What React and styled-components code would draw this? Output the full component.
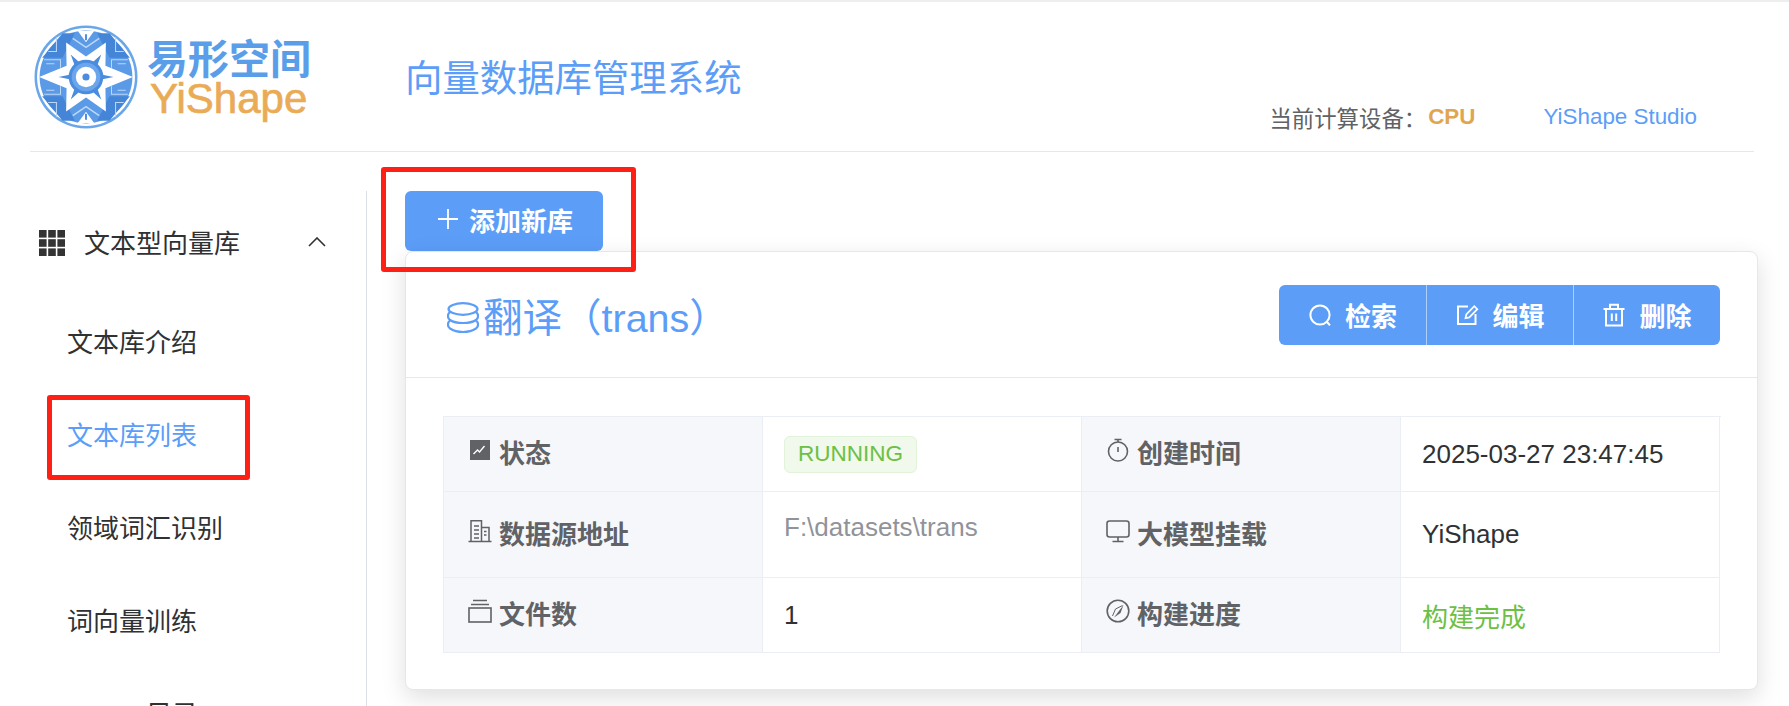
import React from 'react';
import styled, { createGlobalStyle } from 'styled-components';

const FONT = '"Liberation Sans", "Noto Sans CJK SC", sans-serif';

const GlobalStyle = createGlobalStyle`
  html, body {
    margin: 0;
    padding: 0;
    background: #fff;
    font-family: ${FONT};
  }
  * { box-sizing: border-box; }
`;

const Page = styled.div`
  width: 1789px;
  height: 706px;
  overflow: hidden;
  border-top: 2px solid #eeeeee;
  position: relative;
`;

const Header = styled.header`
  display: flex;
  height: 150px;
  margin: 0 35px 0 30px;
  border-bottom: 1px solid #e4e7ed;
`;

const Logo = styled.div`
  display: flex;
  align-items: center;
  gap: 9px;
  width: 375px;
  padding: 0 0 0 4px;
`;

const LogoText = styled.div`
  display: flex;
  flex-direction: column;
`;

const LogoCn = styled.span`
  font-size: 41px;
  line-height: 44px;
  font-weight: 700;
  color: #5a9eea;
`;

const LogoEn = styled.span`
  font-size: 42px;
  line-height: 33px;
  margin-left: 3px;
  color: #eaab56;
  -webkit-text-stroke: 0.7px #eaab56;
`;

const AppTitle = styled.div`
  font-size: 37.4px;
  line-height: 50px;
  color: #5c9df8;
  padding-top: 52px;
`;

const HeaderRight = styled.div`
  display: flex;
  align-items: center;
  margin-left: auto;
  padding: 100px 57px 0 0;
  height: 130px;
  font-size: 22.4px;
  color: #606266;
`;

const Cpu = styled.b`
  color: #e0a64f;
  margin-left: 2px;
`;

const StudioLink = styled.a`
  color: #5c9df8;
  margin-left: 68px;
`;

const Body = styled.div`
  display: flex;
  padding: 39px 31px 0 0;
`;

const Sidebar = styled.aside`
  width: 367px;
  height: 600px;
  flex: none;
  border-right: 1px solid #dcdfe6;
`;

const MenuHead = styled.div`
  display: flex;
  align-items: center;
  height: 106px;
  padding: 0 40px 6px 39px;
  font-size: 26px;
  color: #303133;
  gap: 19px;
`;

const MenuGlyph = styled.span`
  display: flex;
  margin-top: 4px;
`;

const MenuChevron = styled.span`
  margin-left: auto;
  margin-top: 2px;
  display: flex;
`;

const MenuItem = styled.div`
  height: 93px;
  line-height: 93px;
  padding-left: ${({ $indent }) => $indent || 67}px;
  font-size: 26px;
  white-space: nowrap;
  color: ${({ $active }) => ($active ? '#5c9df8' : '#303133')};
`;

const Main = styled.main`
  flex: 1;
  padding-left: 38px;
`;

const PrimaryButton = styled.button`
  display: flex;
  align-items: center;
  gap: 9px;
  height: 60px;
  width: 198px;
  padding: 0 0 4px 31px;
  border: 0;
  border-radius: 6px;
  background: #5c9df8;
  color: #fff;
  font-family: ${FONT};
  font-size: 26px;
  font-weight: 700;
`;

const Card = styled.section`
  position: relative;
  height: 439px;
  background: #fff;
  border: 1px solid #e4e7ed;
  border-radius: 8px;
  box-shadow: 0 8px 24px rgba(0, 0, 0, 0.13);
`;

const CardHead = styled.div`
  display: flex;
  align-items: center;
  justify-content: space-between;
  height: 126px;
  padding: 0 37px 0 41px;
  border-bottom: 1px solid #e4e7ed;
`;

const CardTitle = styled.h2`
  display: flex;
  align-items: center;
  gap: 4px;
  margin: 6px 0 0;
  font-size: 39.5px;
  line-height: 50px;
  font-weight: 400;
  color: #5c9df8;
`;

const ButtonGroup = styled.div`
  display: flex;
  border-radius: 6px;
  overflow: hidden;
`;

const GroupButton = styled.button`
  display: flex;
  align-items: center;
  justify-content: center;
  gap: 13px;
  width: 147px;
  height: 60px;
  padding: 0;
  border: 0;
  border-left: ${({ $first }) => ($first ? '0' : '1px solid rgba(255, 255, 255, 0.5)')};
  background: #5c9df8;
  color: #fff;
  font-family: ${FONT};
  font-size: 26px;
  font-weight: 700;
`;

const CardBody = styled.div`
  padding: 38px 36px 0 37px;
`;

const InfoGrid = styled.div`
  display: grid;
  grid-template-columns: repeat(4, 319px);
  grid-template-rows: 75px 86px 75px;
  border-top: 1px solid #ebeef5;
  border-left: 1px solid #ebeef5;
`;

const LabelCell = styled.div`
  display: flex;
  align-items: center;
  gap: 7px;
  padding: 0 0 5px 23px;
  background: #f5f7fa;
  border-right: 1px solid #ebeef5;
  border-bottom: 1px solid #ebeef5;
  font-size: 26px;
  font-weight: 700;
  color: #606266;
`;

const LabelIcon = styled.span`
  display: flex;
  width: 25px;
  justify-content: center;
  margin-top: -3px;
`;

const ValueCell = styled.div`
  display: flex;
  align-items: center;
  padding: 0 0 ${({ $lift }) => $lift || 0}px 21px;
  border-right: 1px solid #ebeef5;
  border-bottom: 1px solid #ebeef5;
  font-size: 26px;
  color: ${({ $color }) => $color || '#303133'};
`;

const StatusTag = styled.span`
  display: inline-flex;
  align-items: center;
  justify-content: center;
  width: 133px;
  height: 37px;
  border: 1px solid #e1f3d8;
  border-radius: 6px;
  background: #f0f9eb;
  color: #6cc044;
  font-size: 22.5px;
`;

// red annotation frames drawn on top of the screenshot
const Annotation = styled.div`
  position: absolute;
  left: ${({ $x }) => $x}px;
  top: ${({ $y }) => $y}px;
  width: ${({ $w }) => $w}px;
  height: ${({ $h }) => $h}px;
  border: 5px solid #ff2015;
  border-radius: 3px;
  pointer-events: none;
`;

const Stroke = ({ size = 24, width = 2, children }) => (
  <svg
    width={size}
    height={size}
    viewBox="0 0 24 24"
    fill="none"
    stroke="currentColor"
    strokeWidth={width}
  >
    {children}
  </svg>
);

const PlusIcon = () => (
  <Stroke size={24} width={1.8}>
    <path d="M12 2v20M2 12h20" />
  </Stroke>
);

const SearchIcon = () => (
  <Stroke>
    <circle cx="12" cy="12" r="9.6" />
    <path d="M19 19l3 3.4" />
  </Stroke>
);

const EditIcon = () => (
  <Stroke>
    <path d="M13 3.5H3v17.5h17.500V11" />
    <path d="M10.500 15.200l.8-3.800 8-8.200 3 3-8 8.200z" strokeWidth="1.7" />
  </Stroke>
);

const TrashIcon = () => (
  <Stroke>
    <path d="M1.500 6h21M4 6v16.500h16V6M8 6V1.800h8V6M9.800 10.500v7.500M14.200 10.500v7.500" />
  </Stroke>
);

const GridIcon = () => (
  <svg width="26" height="26" viewBox="0 0 26 26" fill="#333">
    {[0, 9.2, 18.4].map((y) =>
      [0, 9.2, 18.4].map((x) => <rect key={`${x}-${y}`} x={x} y={y} width="7.6" height="7.6" />)
    )}
  </svg>
);

const ChevronUp = () => (
  <svg width="18" height="10" viewBox="0 0 18 10" fill="none" stroke="#303133" strokeWidth="1.6">
    <path d="M1 9l8-8 8 8" />
  </svg>
);

const CoinsIcon = () => (
  <svg width="32" height="32" viewBox="0 0 32 32" fill="none" stroke="currentColor" strokeWidth="2.200">
    <ellipse cx="16" cy="7" rx="14.500" ry="5.800" />
    <path d="M3 10C0 12.500 .5 16 3 18c3 2 8 3 13 3s10-1 13-3c2.500-2 3-5.500 0-8" />
    <path d="M3 18.500C0 21 .5 24.500 3 26.500c3 2 8 3.500 13 3.500s10-1.500 13-3.500c2.500-2 3-5.500 0-8" />
  </svg>
);

const ChartIcon = () => (
  <svg width="20" height="20" viewBox="0 0 20 20">
    <rect width="20" height="20" fill="#606266" />
    <path d="M3.500 14l4-4 2 2 5-6" fill="none" stroke="#fff" strokeWidth="1.400" />
  </svg>
);

const BuildingIcon = () => (
  <Stroke width={1.500}>
    <path d="M.5 22.500h23M3 22.500V1.800h10.500v20.700M13.500 8.500h7.500v14M6 7h5M6 11h5M6 15h5M6 19h5M16 12.500h2.500M16 16h2.500" />
  </Stroke>
);

const FilesIcon = () => (
  <Stroke width={1.600}>
    <path d="M5 1.500h14M3 5.500h18" />
    <rect x="1" y="9" width="22" height="14" />
  </Stroke>
);

const TimerIcon = () => (
  <Stroke width={1.600}>
    <circle cx="12" cy="13.500" r="9.500" />
    <path d="M8.500 1.500h7M12 1.500V4M12 9v5" />
  </Stroke>
);

const MonitorIcon = () => (
  <Stroke width={1.600}>
    <rect x="1" y="2" width="22" height="16" rx="2.500" />
    <path d="M12 18v4M6.500 22.500h11" />
  </Stroke>
);

const CompassIcon = () => (
  <Stroke width={1.600}>
    <circle cx="12" cy="12" r="10.800" />
    <path d="M17.500 6L14.500 14 8 18.500z" fill="currentColor" stroke="none" />
    <path d="M16.500 6.500L9.500 10 6.500 17" strokeWidth="1" />
  </Stroke>
);

// points of the star, angle in degrees and radius from the centre
const starPoints = () => {
  const outer = [
    [0, 46],
    [60, 39],
    [120, 39],
    [180, 46],
    [240, 39],
    [300, 39],
  ];
  const pts = [];
  outer.forEach(([a, r]) => {
    const t = (a * Math.PI) / 180;
    pts.push([51 + r * Math.cos(t), 51 + r * Math.sin(t)]);
    const m = ((a + 30) * Math.PI) / 180;
    const inner = (a + 30) % 180 === 90 ? 20 : 22;
    pts.push([51 + inner * Math.cos(m), 51 + inner * Math.sin(m)]);
  });
  return pts.map((p) => p.join(',')).join(' ');
};

const BrandMark = () => (
  <svg width="104" height="104" viewBox="0 0 102 102">
    <circle cx="51" cy="51" r="50.500" fill="#6aa6ea" />
    <circle cx="51" cy="51" r="48" fill="#fff" />
    <circle cx="51" cy="51" r="45.500" fill="#5b9ae6" />
    <path d="M8 32h20L40 8H28zM94 32H74L62 8h12zM8 70h20l12 24H28zM94 70H74L62 94h12z" fill="#4585d8" />
    <g fill="none" stroke="#bcd8f7" strokeWidth="1">
      <path d="M22 12v14h-8M80 12v14h8M22 90V76h-8M80 90V76h8" />
      <path d="M10 34h16v8M92 34H76v8M10 68h16v-8M92 68H76v-8M12 38h8M82 38h8M12 64h8M82 64h8" />
      <path d="M38 13l13 9 13-9M38 89l13-9 13 9" strokeWidth="1.500" />
    </g>
    <polygon points={starPoints()} fill="#fff" />
    <path d="M43 6h16l-8 11zM43 96h16l-8-11z" fill="#fff" />
    <path d="M51 9v6M51 87v6" stroke="#4f8fe0" strokeWidth="2" />
    <g fill="#4a8cde">
      <circle cx="51" cy="51" r="17" />
      <path d="M24 51l12-2.500v5zM78 51l-12-2.500v5z" />
      <path d="M36 29l9 8-5 3zM66 29l-9 8 5 3zM36 73l9-8-5-3zM66 73l-9-8 5-3z" />
    </g>
    <circle cx="51" cy="51" r="14" fill="#6ba6ec" />
    <circle cx="51" cy="51" r="10" fill="#fff" />
    <circle cx="51" cy="51" r="3.500" fill="#4a8cde" />
  </svg>
);

const infoRows = [
  [
    { icon: <ChartIcon />, label: '状态', value: <StatusTag>RUNNING</StatusTag> },
    { icon: <TimerIcon />, label: '创建时间', value: '2025-03-27 23:47:45' },
  ],
  [
    { icon: <BuildingIcon />, label: '数据源地址', value: 'F:\\datasets\\trans', color: '#909399', lift: 14 },
    { icon: <MonitorIcon />, label: '大模型挂载', value: 'YiShape' },
  ],
  [
    { icon: <FilesIcon />, label: '文件数', value: '1' },
    { icon: <CompassIcon />, label: '构建进度', value: '构建完成', color: '#6cc044' },
  ],
];

const menuItems = ['文本库介绍', '文本库列表', '领域词汇识别', '词向量训练'];

export default function App() {
  return (
    <>
      <GlobalStyle />
      <Page>
        <Header>
          <Logo>
            <BrandMark />
            <LogoText>
              <LogoCn>易形空间</LogoCn>
              <LogoEn>YiShape</LogoEn>
            </LogoText>
          </Logo>
          <AppTitle>向量数据库管理系统</AppTitle>
          <HeaderRight>
            当前计算设备：<Cpu>CPU</Cpu>
            <StudioLink>YiShape Studio</StudioLink>
          </HeaderRight>
        </Header>
        <Body>
          <Sidebar>
            <MenuHead>
              <MenuGlyph>
                <GridIcon />
              </MenuGlyph>
              文本型向量库
              <MenuChevron>
                <ChevronUp />
              </MenuChevron>
            </MenuHead>
            {menuItems.map((item) => (
              <MenuItem key={item} $active={item === '文本库列表'}>
                {item}
              </MenuItem>
            ))}
            <MenuItem $indent={146}>目录</MenuItem>
          </Sidebar>
          <Main>
            <PrimaryButton>
              <PlusIcon />
              添加新库
            </PrimaryButton>
            <Card>
              <CardHead>
                <CardTitle>
                  <CoinsIcon />
                  翻译（trans）
                </CardTitle>
                <ButtonGroup>
                  <GroupButton $first>
                    <SearchIcon />
                    检索
                  </GroupButton>
                  <GroupButton>
                    <EditIcon />
                    编辑
                  </GroupButton>
                  <GroupButton>
                    <TrashIcon />
                    删除
                  </GroupButton>
                </ButtonGroup>
              </CardHead>
              <CardBody>
                <InfoGrid>
                  {infoRows.flat().map((cell) => (
                    <React.Fragment key={cell.label}>
                      <LabelCell>
                        <LabelIcon>{cell.icon}</LabelIcon>
                        {cell.label}
                      </LabelCell>
                      <ValueCell $color={cell.color} $lift={cell.lift}>
                        {cell.value}
                      </ValueCell>
                    </React.Fragment>
                  ))}
                </InfoGrid>
              </CardBody>
            </Card>
          </Main>
        </Body>
        <Annotation $x={381} $y={165} $w={255} $h={105} />
        <Annotation $x={47} $y={393} $w={203} $h={85} />
      </Page>
    </>
  );
}
